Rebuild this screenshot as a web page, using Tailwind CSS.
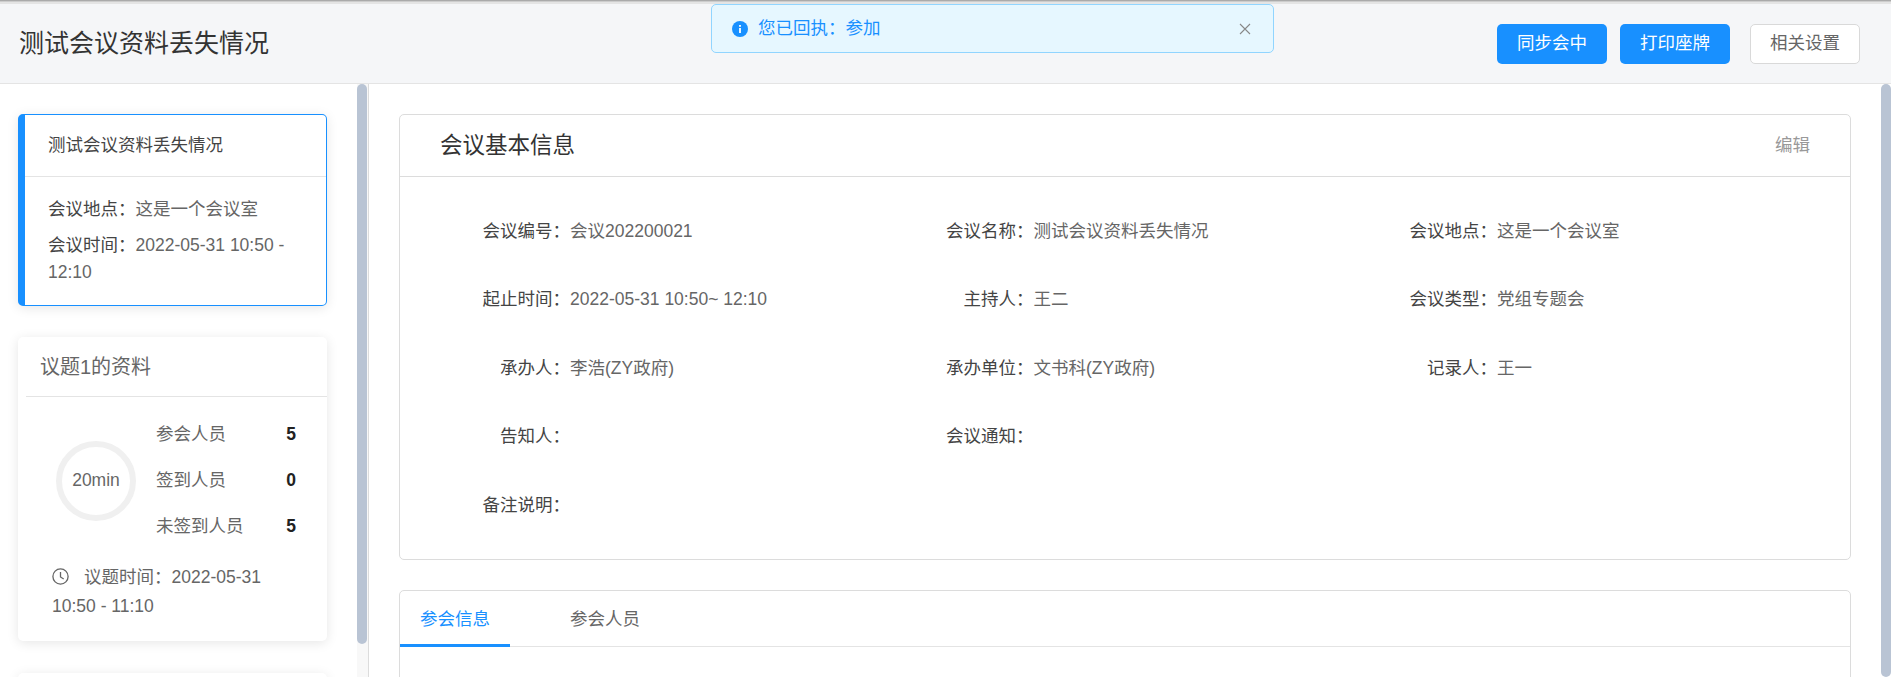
<!DOCTYPE html>
<html lang="zh-CN">
  <head>
    <meta charset="UTF-8" />
    <title>测试会议资料丢失情况</title>
    <script src="https://cdn.jsdelivr.net/npm/@tailwindcss/browser@4"></script>
  </head>
  <body class="relative h-[677px] overflow-hidden bg-white font-['Liberation_Sans','Noto_Sans_CJK_SC',sans-serif] text-[17.5px] text-[#444]">
    <!-- 顶部线 -->
    <div class="h-[4px] border-b-[2px] border-t-[1px] border-b-[#e4e4e4] border-t-[#aaa] bg-[#ccc]"></div>

    <!-- 提示 -->
    <div class="absolute left-[711px] top-[4px] flex h-[49px] w-[563px] items-center rounded-[5px] border border-[#91d5ff] bg-[#e6f7ff] pl-[20px] pr-[22px]">
      <svg class="h-[16px] w-[16px]" viewBox="0 0 16 16">
        <circle cx="8" cy="8" r="8" fill="#1890ff" />
        <rect x="7.1" y="7" width="1.8" height="5" fill="#fff" />
        <rect x="7.1" y="4" width="1.8" height="1.8" fill="#fff" />
      </svg>
      <span class="ml-[10px] flex-1 text-[#1890ff]">您已回执：参加</span>
      <svg class="h-[12px] w-[12px]" viewBox="0 0 12 12" fill="none" stroke="#888" stroke-width="1.1">
        <path d="M1 1l10 10M11 1l-10 10" />
      </svg>
    </div>

    <!-- 头部 -->
    <header class="flex h-[80px] items-center justify-between border-b border-[#e4e4e4] bg-[#f5f6f8] pl-[19px] pr-[31px]">
      <h1 class="text-[25px] font-normal text-[#333]">测试会议资料丢失情况</h1>
      <div class="flex items-center">
        <button class="mr-[13px] h-[40px] w-[110px] rounded-[5px] bg-[#1890ff] text-white">同步会中</button>
        <button class="mr-[20px] h-[40px] w-[110px] rounded-[5px] bg-[#1890ff] text-white">打印座牌</button>
        <button class="h-[40px] w-[110px] rounded-[5px] border border-[#d9d9d9] bg-white text-[#666]">相关设置</button>
      </div>
    </header>

    <div class="flex h-[593px]">
      <!-- 左侧列表 -->
      <aside class="flex w-[369px] shrink-0 border-r border-[#dcdcdc]">
        <div class="w-[357px] shrink-0 overflow-hidden pl-[18px] pr-[30px] pt-[30px]">
          <section class="h-[192px] rounded-[5px] border border-l-[7px] border-[#1890ff] bg-white shadow-[0_2px_12px_rgba(0,0,0,0.1)]">
            <div class="flex h-[62px] items-center border-b border-[#e4e4e4] pl-[23px]">测试会议资料丢失情况</div>
            <div class="pl-[23px] pr-[20px] pt-[19px] leading-[27px]">
              <p>会议地点：<span class="text-[#666]">这是一个会议室</span></p>
              <p class="mt-[9px]">会议时间：<span class="text-[#666]">2022-05-31 10:50 - 12:10</span></p>
            </div>
          </section>

          <section class="mt-[31px] h-[304px] rounded-[5px] bg-white pl-[8px] shadow-[0_2px_12px_rgba(0,0,0,0.1)]">
            <div class="flex h-[60px] items-center border-b border-[#e4e4e4] pl-[14px] text-[20px] text-[#666]">议题1的资料</div>
            <div class="flex h-[165px] items-center pl-[30px] pt-[2px]">
              <div class="flex h-[80px] w-[80px] shrink-0 items-center justify-center rounded-full border-[6px] border-[#f0f0f0] text-[#666]">20min</div>
              <div class="ml-[20px] w-[140px] text-[#666]">
                <div class="flex h-[46px] items-center justify-between">参会人员<b class="text-[#222]">5</b></div>
                <div class="flex h-[46px] items-center justify-between">签到人员<b class="text-[#222]">0</b></div>
                <div class="flex h-[46px] items-center justify-between">未签到人员<b class="text-[#222]">5</b></div>
              </div>
            </div>
            <p class="pl-[26px] pr-[30px] pt-[1px] leading-[29px] text-[#666]">
              <svg class="mr-[15px] inline h-[17px] w-[17px] align-[-2px]" viewBox="0 0 17 17" fill="none" stroke="#666" stroke-width="1.3">
                <circle cx="8.5" cy="8.5" r="7.6" />
                <path d="M8.5 4v5l3.2 2" />
              </svg>议题时间：2022-05-31 10:50 - 11:10
            </p>
          </section>

          <section class="mt-[32px] h-[100px] rounded-[5px] bg-white shadow-[0_2px_12px_rgba(0,0,0,0.1)]"></section>
        </div>
        <div class="w-[11px] shrink-0 bg-[#f8f8f8]">
          <div class="h-[560px] w-[10px] rounded-[5px] bg-[#b9c4d4]"></div>
        </div>
      </aside>

      <!-- 右侧详情 -->
      <main class="flex min-w-0 flex-1">
        <div class="w-[1512px] shrink-0 overflow-hidden pl-[30px] pr-[30px] pt-[30px]">
          <section class="h-[446px] rounded-[5px] border border-[#dcdcdc]">
            <div class="flex h-[62px] items-center justify-between border-b border-[#dcdcdc] pl-[40px] pr-[40px]">
              <h2 class="text-[22.5px] font-normal text-[#333]">会议基本信息</h2>
              <a class="text-[#999]">编辑</a>
            </div>
            <div class="grid grid-cols-[463.5px_463.5px_1fr] pt-[20px]">
              <div class="flex h-[68.4px] items-center"><span class="w-[170px] text-right">会议编号：</span><span class="text-[#666]">会议202200021</span></div>
              <div class="flex h-[68.4px] items-center"><span class="w-[170px] text-right">会议名称：</span><span class="text-[#666]">测试会议资料丢失情况</span></div>
              <div class="flex h-[68.4px] items-center"><span class="w-[170px] text-right">会议地点：</span><span class="text-[#666]">这是一个会议室</span></div>
              <div class="flex h-[68.4px] items-center"><span class="w-[170px] text-right">起止时间：</span><span class="text-[#666]">2022-05-31 10:50~ 12:10</span></div>
              <div class="flex h-[68.4px] items-center"><span class="w-[170px] text-right">主持人：</span><span class="text-[#666]">王二</span></div>
              <div class="flex h-[68.4px] items-center"><span class="w-[170px] text-right">会议类型：</span><span class="text-[#666]">党组专题会</span></div>
              <div class="flex h-[68.4px] items-center"><span class="w-[170px] text-right">承办人：</span><span class="text-[#666]">李浩(ZY政府)</span></div>
              <div class="flex h-[68.4px] items-center"><span class="w-[170px] text-right">承办单位：</span><span class="text-[#666]">文书科(ZY政府)</span></div>
              <div class="flex h-[68.4px] items-center"><span class="w-[170px] text-right">记录人：</span><span class="text-[#666]">王一</span></div>
              <div class="flex h-[68.4px] items-center"><span class="w-[170px] text-right">告知人：</span></div>
              <div class="col-span-2 flex h-[68.4px] items-center"><span class="w-[170px] text-right">会议通知：</span></div>
              <div class="col-span-3 flex h-[68.4px] items-center"><span class="w-[170px] text-right">备注说明：</span></div>
            </div>
          </section>

          <section class="mt-[30px] h-[200px] rounded-[5px] border border-[#dcdcdc]">
            <div class="flex h-[56px] border-b border-[#e4e4e4]">
              <a class="flex h-[56px] w-[110px] items-center justify-center border-b-[3px] border-[#1890ff] pt-[3px] text-[#1890ff]">参会信息</a>
              <a class="ml-[60px] flex h-[56px] items-center text-[#666]">参会人员</a>
            </div>
          </section>
        </div>
        <div class="w-[10px] shrink-0 rounded-[5px] bg-[#b9c4d4]"></div>
      </main>
    </div>
  </body>
</html>
